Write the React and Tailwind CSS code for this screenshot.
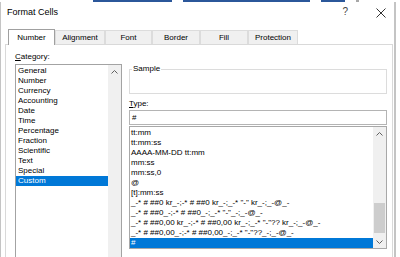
import React from "react";

const categories = [
  "General",
  "Number",
  "Currency",
  "Accounting",
  "Date",
  "Time",
  "Percentage",
  "Fraction",
  "Scientific",
  "Text",
  "Special",
  "Custom",
];

const types = [
  "tt:mm",
  "tt:mm:ss",
  "AAAA-MM-DD tt:mm",
  "mm:ss",
  "mm:ss,0",
  "@",
  "[t]:mm:ss",
  '_-* # ##0 kr_-;-* # ##0 kr_-;_-* "-" kr_-;_-@_-',
  '_-* # ##0_-;-* # ##0_-;_-* "-"_-;_-@_-',
  '_-* # ##0,00 kr_-;-* # ##0,00 kr_-;_-* "-"?? kr_-;_-@_-',
  '_-* # ##0,00_-;-* # ##0,00_-;_-* "-"??_-;_-@_-',
  "#",
];

const tabs = [
  { label: "Alignment", w: "w-[50px]" },
  { label: "Font", w: "w-[47px]" },
  { label: "Border", w: "w-[48px]" },
  { label: "Fill", w: "w-[48px]" },
  { label: "Protection", w: "w-[50px]" },
];

const Chevron = ({ down }) => (
  <svg width="7" height="4" viewBox="0 0 7 4" fill="none">
    <path
      d={down ? "M0.5 0.5 L3.5 3.5 L6.5 0.5" : "M0.5 3.5 L3.5 0.5 L6.5 3.5"}
      stroke="#606060"
      strokeWidth="1"
    />
  </svg>
);

const App = () => {
  return (
    <div className="w-[400px] h-[257px] overflow-hidden bg-white text-black font-['Liberation_Sans',Arial,sans-serif] text-[8px] leading-[10px]">
      {/* bits of the ribbon behind the dialog */}
      <div className="flex h-[2px]">
        <div className="w-[93px]" />
        <div className="w-[79px] bg-[#2b579a]" />
        <div className="w-[11px]" />
        <div className="w-[127px] bg-[#2b579a]" />
        <div className="w-[11px]" />
        <div className="w-[24px] bg-[#2b579a]" />
        <div className="w-[11px]" />
        <div className="w-[3px] bg-[#a8a8a8]" />
      </div>

      <div className="w-[396px] h-[255px] border-l border-r-2 border-[#c4c4c4] flex flex-col overflow-hidden">
        {/* title bar */}
        <div className="shrink-0 h-[27px] flex items-start pt-[5px] pl-[6px]">
          <span className="text-[9px] leading-[10px] flex-1">Format Cells</span>
          <span className="text-[10px] leading-[10px] text-[#444] mr-[28px]">?</span>
          <svg width="10" height="10" viewBox="0 0 10 10" className="mr-[8px] mt-[1px]">
            <path d="M0.5 0.5 L9.5 9.5 M9.5 0.5 L0.5 9.5" stroke="#333" strokeWidth="1" />
          </svg>
        </div>

        {/* tabs */}
        <div className="shrink-0 flex items-end pl-[7px] h-[15px]">
          <div className="relative z-10 w-[47px] h-[16px] -mb-px bg-white border border-b-0 border-[#a0a0a0] flex items-center justify-center">
            Number
          </div>
          {tabs.map((t) => (
            <div
              key={t.label}
              className={`${t.w} h-[14px] bg-[#f0f0f0] border border-b-0 border-[#dcdcdc] flex items-center justify-center`}
            >
              {t.label}
            </div>
          ))}
        </div>

        {/* tab panel */}
        <div className="ml-[4px] w-[388px] flex-1 min-h-0 overflow-hidden border-t border-l border-r border-[#d9d9d9] flex pl-[9px] pt-[7px]">
          {/* category */}
          <div className="w-[107px] shrink-0 flex flex-col">
            <div>
              <u className="underline-offset-1">C</u>ategory:
            </div>
            <div className="shrink-0 mt-[2px] h-[200px] border border-[#a3a3a3] flex">
              <div className="flex-1 pt-[1px]">
                {categories.map((c) => (
                  <div
                    key={c}
                    className={`h-[10px] pl-[2px] ${c === "Custom" ? "bg-[#0078d7] text-white" : ""}`}
                  >
                    {c}
                  </div>
                ))}
              </div>
              <div className="w-[13px] bg-[#f0f0f0] flex flex-col items-center pt-[5px]">
                <Chevron />
              </div>
            </div>
          </div>

          {/* sample + type */}
          <div className="ml-[7px] w-[258px] shrink-0 flex flex-col">
            <fieldset className="mt-[12px] border border-[#dcdcdc]">
              <legend className="ml-[2px] px-[1px] leading-[10px]">Sample</legend>
              <div className="h-[19px]" />
            </fieldset>

            <div className="mt-[5px]">
              <u className="underline-offset-1">T</u>ype:
            </div>
            <div className="shrink-0 mt-[1px] h-[15px] border border-[#b4b4b4] flex items-center pl-[2px]">
              #
            </div>

            <div className="shrink-0 mt-[1px] h-[123px] border border-[#a8a8a8] flex">
              <div className="flex-1 pt-[1px] overflow-hidden">
                {types.map((t, i) => (
                  <div
                    key={i}
                    className={`h-[10px] pl-[1px] whitespace-nowrap ${i === types.length - 1 ? "bg-[#0078d7] text-white" : ""}`}
                  >
                    {t}
                  </div>
                ))}
              </div>
              <div className="w-[13px] bg-[#f0f0f0] flex flex-col">
                <div className="h-[13px] flex items-center justify-center">
                  <Chevron />
                </div>
                <div className="flex-1 flex flex-col justify-end pb-[2px]">
                  <div className="h-[30px] mx-[1px] bg-[#cdcdcd]" />
                </div>
                <div className="h-[13px] flex items-center justify-center">
                  <Chevron down />
                </div>
              </div>
            </div>
          </div>
        </div>
      </div>
    </div>
  );
};

export default App;
